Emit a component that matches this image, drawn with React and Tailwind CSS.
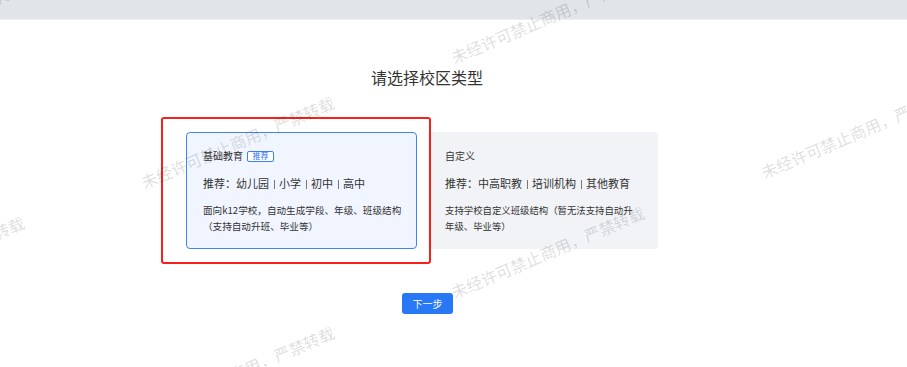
import React from "react";

const marks = [
  [-165, 75],
  [-165, 310],
  [145, 190],
  [145, 420],
  [455, 65],
  [455, 300],
  [765, 180],
];

function Sep() {
  return <span className="inline-block w-px h-[9px] bg-[#777] mx-[4.5px] align-[-1px]" />;
}

export default function App() {
  return (
    <div className="relative w-[907px] h-[367px] overflow-hidden bg-white font-['Noto_Sans_CJK_SC',sans-serif]">
      <div className="h-[20px] bg-[#e1e4e9] border-b border-[#eceef1]" />
      <div className="pt-[45px]">
        <h1 className="ml-[186px] w-[482px] text-center text-[16px] leading-[24px] text-[#333]">
          请选择校区类型
        </h1>
        <div className="ml-[186px] mt-[43px] flex gap-[11px]">
          <div className="w-[231px] h-[117px] rounded-[4px] border border-[#3f84f5] bg-[#f0f5ff] pl-[16px] pt-[16px] text-[#333]">
            <div className="flex items-center gap-[4px] h-[14px]">
              <span className="text-[10px] leading-[14px]">基础教育</span>
              <span className="w-[27px] h-[11px] flex items-center justify-center text-[8px] leading-none border border-[#3d7ff6] rounded-[2px] text-[#2f6ff0] bg-white">
                推荐
              </span>
            </div>
            <div className="mt-[12px] text-[11px] leading-[16px] whitespace-nowrap">
              推荐：幼儿园<Sep />小学<Sep />初中<Sep />高中
            </div>
            <div className="mt-[11px] text-[9.6px] leading-[16px] whitespace-nowrap">
              <div>面向k12学校，自动生成学段、年级、班级结构</div>
              <div>（支持自动升班、毕业等）</div>
            </div>
          </div>
          <div className="w-[230px] h-[117px] rounded-[4px] bg-[#f2f3f7] pl-[17px] pt-[17px] text-[#333]">
            <div className="h-[14px] text-[10px] leading-[14px]">自定义</div>
            <div className="mt-[12px] text-[11px] leading-[16px] whitespace-nowrap">
              推荐：中高职教<Sep />培训机构<Sep />其他教育
            </div>
            <div className="mt-[11px] text-[9.4px] leading-[16px] whitespace-nowrap">
              <div>支持学校自定义班级结构（暂无法支持自动升</div>
              <div>年级、毕业等）</div>
            </div>
          </div>
        </div>
        <button className="ml-[402px] mt-[44px] w-[51px] h-[21px] rounded-[3px] bg-[#2878f6] text-white text-[10px] leading-none flex items-center justify-center">
          下一步
        </button>
      </div>

      <div className="absolute left-[161px] top-[117px] w-[270px] h-[147px] border-2 border-[#f5221b] rounded-[3px] pointer-events-none" />

      {marks.map(([x, y], i) => (
        <div
          key={i}
          className="absolute whitespace-nowrap text-[16px] leading-none text-black/15 origin-bottom-left -rotate-[23deg] pointer-events-none select-none"
          style={{ left: x, top: y - 16 }}
        >
          未经许可禁止商用，严禁转载
        </div>
      ))}
    </div>
  );
}
